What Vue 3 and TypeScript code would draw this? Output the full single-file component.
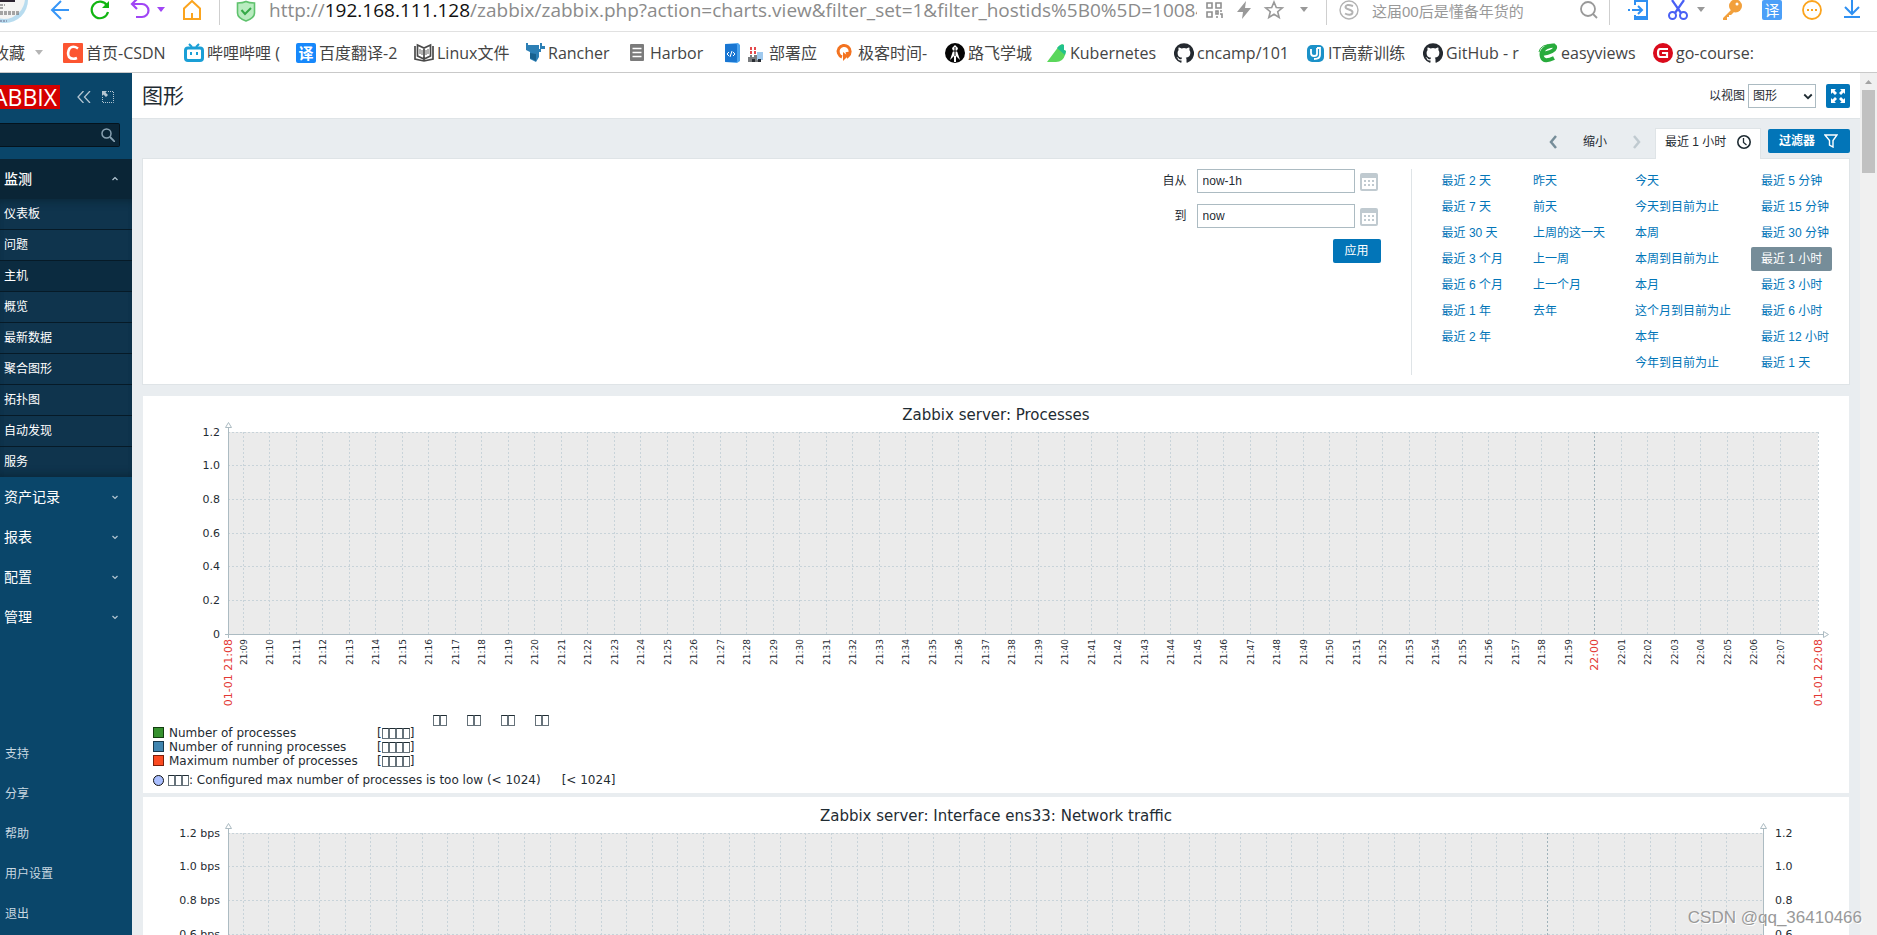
<script setup lang="ts">
import { computed, onBeforeUnmount, onMounted, ref } from 'vue'

interface Bookmark { icon: string; label: string }
interface GraphItem { name: string; tone: string }
interface Tick { x: number; label: string; major: boolean }
interface Graph {
  id: string
  title: string
  unit: string
  insetRight: number
  rightAxis: boolean
  timeLabels: boolean
  levelLabels: number
  items: GraphItem[]
}

const bookmarks: Bookmark[] = [
  { icon: 'csdn', label: '首页-CSDN' },
  { icon: 'bili', label: '哔哩哔哩 (' },
  { icon: 'fanyi', label: '百度翻译-2' },
  { icon: 'book', label: 'Linux文件' },
  { icon: 'rancher', label: 'Rancher' },
  { icon: 'doc', label: 'Harbor' },
  { icon: 'deploy', label: '部署应' },
  { icon: 'geek', label: '极客时间-' },
  { icon: 'luffy', label: '路飞学城' },
  { icon: 'bird', label: 'Kubernetes' },
  { icon: 'github', label: 'cncamp/101' },
  { icon: 'itpeixun', label: 'IT高薪训练' },
  { icon: 'github', label: 'GitHub - r' },
  { icon: 'easy', label: 'easyviews' },
  { icon: 'gocourse', label: 'go-course:' },
]

const monitoring = ['仪表板', '问题', '主机', '概览', '最新数据', '聚合图形', '拓扑图', '自动发现', '服务']
const sections = ['资产记录', '报表', '配置', '管理']
const support = ['支持', '分享', '帮助', '用户设置', '退出']

const ranges: string[][] = [
  ['最近 2 天', '最近 7 天', '最近 30 天', '最近 3 个月', '最近 6 个月', '最近 1 年', '最近 2 年'],
  ['昨天', '前天', '上周的这一天', '上一周', '上一个月', '去年'],
  ['今天', '今天到目前为止', '本周', '本周到目前为止', '本月', '这个月到目前为止', '本年', '今年到目前为止'],
  ['最近 5 分钟', '最近 15 分钟', '最近 30 分钟', '最近 1 小时', '最近 3 小时', '最近 6 小时', '最近 12 小时', '最近 1 天'],
]
const selectedRange = ref('最近 1 小时')
const from = ref('now-1h')
const to = ref('now')
const view = ref('图形')

const graphs: Graph[] = [
  {
    id: 'processes',
    title: 'Zabbix server: Processes',
    unit: '',
    insetRight: 31,
    rightAxis: false,
    timeLabels: true,
    levelLabels: 7,
    items: [
      { name: 'Number of processes', tone: 'green' },
      { name: 'Number of running processes', tone: 'blue' },
      { name: 'Maximum number of processes', tone: 'red' },
    ],
  },
  {
    id: 'traffic',
    title: 'Zabbix server: Interface ens33: Network traffic',
    unit: ' bps',
    insetRight: 86,
    rightAxis: true,
    timeLabels: false,
    levelLabels: 4,
    items: [],
  },
]

const LEFT = 85
const TOP = 36
const BOTTOM = 238
const levels = ['1.2', '1.0', '0.8', '0.6', '0.4', '0.2', '0']

const chartArea = ref<HTMLElement | null>(null)
const width = ref(1706)
let observer: ResizeObserver | undefined

onMounted(() => {
  if (!chartArea.value) return
  width.value = chartArea.value.clientWidth
  observer = new ResizeObserver(() => {
    if (chartArea.value) width.value = chartArea.value.clientWidth
  })
  observer.observe(chartArea.value)
})
onBeforeUnmount(() => observer?.disconnect())

const snap = (v: number) => Math.floor(v) + 0.5

const plots = computed(() =>
  graphs.map((g) => {
    const right = width.value - g.insetRight
    const step = (right - LEFT) / 60
    const ticks: Tick[] = []
    for (let i = 0; i < 59; i++) {
      const minute = 9 + i
      const hour = minute < 60 ? 21 : 22
      ticks.push({
        x: snap(LEFT + 15 + i * step),
        label: `${hour}:${String(minute % 60).padStart(2, '0')}`,
        major: minute % 60 === 0,
      })
    }
    const rows = levels.map((label, i) => ({
      y: snap(TOP + ((BOTTOM - TOP) * i) / 6),
      label: label === '0' ? '0' : label + g.unit,
      plain: label,
    }))
    return { ...g, right, ticks, rows, labelled: rows.slice(0, g.levelLabels) }
  }),
)
</script>

<template>
  <div class="window">
    <svg class="sprite" aria-hidden="true">
      <symbol id="csdn" viewBox="0 0 20 20"><rect width="20" height="20" rx="1" fill="#fc5531" /><path d="M15 5.500Q10 2 6.500 5.500Q4 10 6 14Q9 17 14 15" fill="none" stroke="#fff" stroke-width="2.600" /></symbol>
      <symbol id="bili" viewBox="0 0 20 20"><path d="M5 1l3 3M15 1l-3 3" stroke="#1a9fd6" stroke-width="2" /><rect x="1.500" y="5" width="17" height="12.500" rx="2.500" fill="#fff" stroke="#1a9fd6" stroke-width="3" /><path d="M7 9v3M13 9v3" stroke="#1a9fd6" stroke-width="2" /></symbol>
      <symbol id="fanyi" viewBox="0 0 20 20"><rect width="20" height="20" rx="2" fill="#1788fb" /><text x="10" y="15.500" text-anchor="middle" font-size="15" font-weight="700" fill="#fff">译</text></symbol>
      <symbol id="book" viewBox="0 0 20 20"><path d="M1 3v13l9 2 9-2V3M10 5v13M3.500 2L10 5l6.500-3v11L10 16l-6.500-3z" fill="none" stroke="#4a4a4a" stroke-width="1.700" /><path d="M6 6v5M8 7v5M12 7v5M14 6v5" stroke="#666" /></symbol>
      <symbol id="rancher" viewBox="0 0 20 20"><path d="M1 0h2v2h11v4h1V0h2v3h3v3h-4v3h-2v5l-3 5-6-3V9L1 7z" fill="#2c7fb5" /><path d="M5 10l6 1v7l-6-3z" fill="#18618f" /></symbol>
      <symbol id="doc" viewBox="0 0 20 20"><rect x="3" y="1" width="14" height="17" rx="1" fill="#7b7b7b" /><path d="M5.500 5.500h9M5.500 9.500h9M5.500 13.500h9" stroke="#fff" stroke-width="1.500" /></symbol>
      <symbol id="deploy" viewBox="0 0 44 20"><path d="M3 1l13-1 2 2v16l-3 2-12-1z" fill="#4aa3ee" /><rect x="3" y="1" width="12" height="18" rx="1" fill="#1976d2" /><path d="M7 9l-2 2 2 2M11 9l2 2-2 2M10 8l-2 6" fill="none" stroke="#fff" /><path d="M29 4v8M33 4v8" stroke="#e4494c" stroke-width="2" stroke-dasharray="3 1" /><path d="M26 19v-5h2v-2h2v2h2v-2h3v3h4v4z" fill="#7a7d80" /><rect x="35" y="9" width="6" height="8" fill="#9fc9ee" /><path d="M30 16h3v3h-3zM36 16h3v3h-3z" fill="#292d33" /></symbol>
      <symbol id="geek" viewBox="0 0 20 20"><path d="M7 14a6 6 0 1 1 6-1l-1-4" fill="none" stroke="#f37321" stroke-width="3" /><path d="M8 9v9l5-5z" fill="#f37321" /></symbol>
      <symbol id="luffy" viewBox="0 0 20 20"><circle cx="10" cy="10" r="10" fill="#050505" /><path d="M10 2l3 3-1 3 3 9-4-4v6H9v-6l-4 4 3-9-1-3z" fill="#fff" /><path d="M10 4v9M7 8h6" stroke="#050505" /></symbol>
      <symbol id="bird" viewBox="0 0 20 20"><path d="M0 19L12 3q3-3 5-1v5l2 1-1 4q-2 7-9 7z" fill="#5bd75b" /><path d="M10 5q4-5 7-3v5l2 1-1 4z" fill="#21c18c" /></symbol>
      <symbol id="github" viewBox="0 0 24 24"><path fill="#24292f" d="M12 .3a12 12 0 0 0-3.800 23.400c.6.1.8-.3.8-.6v-2.200c-3.300.7-4-1.400-4-1.400-.6-1.400-1.400-1.800-1.400-1.800-1-.7.1-.7.1-.7 1.200 0 1.900 1.200 1.900 1.200 1 1.800 2.800 1.300 3.500 1 0-.8.4-1.300.7-1.600-2.700-.3-5.500-1.300-5.500-6 0-1.200.5-2.300 1.300-3.100-.2-.4-.6-1.600 0-3.200 0 0 1-.3 3.400 1.200a11.500 11.500 0 0 1 6 0c2.300-1.500 3.300-1.200 3.300-1.200.6 1.600.2 2.800.1 3.200.8.800 1.200 1.900 1.200 3.200 0 4.600-2.800 5.600-5.500 5.900.5.4.9 1 .9 2.200v3.300c0 .3.1.7.800.6A12 12 0 0 0 12 .3" /></symbol>
      <symbol id="itpeixun" viewBox="0 0 20 20"><rect x="2" y="2" width="17" height="17" rx="5" fill="#1b91c8" /><path d="M6 6v4q0 3 3 3t3-2V5M12 5h3v7q0 4-6 4" fill="none" stroke="#fff" stroke-width="1.800" /></symbol>
      <symbol id="easy" viewBox="0 0 20 20"><path d="M4 11Q16 9 17 5T9 4Q2 8 4 14t12 1" fill="none" stroke="#28ab3c" stroke-width="4" /><path d="M1 9Q2 1 17 1" fill="none" stroke="#28ab3c" /></symbol>
      <symbol id="gocourse" viewBox="0 0 20 20"><circle cx="10" cy="10" r="10" fill="#da0b1c" /><path d="M15 6H7Q5 6 5 10t2 4h7v-4h-5" fill="none" stroke="#fff" stroke-width="2.200" /></symbol>
      <symbol id="caret" viewBox="0 0 10 10"><path d="M1 2h8L5 7z" fill="currentColor" /></symbol>
      <symbol id="chevron" viewBox="0 0 8 8"><path d="M1.500 3L4 5.500 6.500 3" fill="none" stroke="currentColor" stroke-width="1.200" /></symbol>
    </svg>

    <header class="toolbar">
      <svg class="avatar" viewBox="0 0 28 24"><circle cx="5" cy="0" r="23" fill="#b8dcef" /><circle cx="4" cy="-2" r="21" fill="#f5f5f3" /><path d="M0 0h15v2H0z" fill="#2c2430" /><path d="M0 5h5M0 8h4M0 12h20M0 14h19" stroke="#555" stroke-dasharray="3 1" /><path d="M0 21h7" stroke="#668" stroke-dasharray="2 1" /></svg>
      <button class="tool back" aria-label="后退"><svg viewBox="0 0 20 20"><path d="M19 10H3M11 1l-9 9 9 9" fill="none" stroke="#3796f7" stroke-width="2" /></svg></button>
      <button class="tool reload" aria-label="刷新"><svg viewBox="0 0 20 20"><path d="M17 5.500A8.300 8.300 0 1 0 18 12" fill="none" stroke="#12b512" stroke-width="2.200" /><path d="M19 1v7h-7z" fill="#12b512" /></svg></button>
      <button class="tool undo" aria-label="撤销"><svg viewBox="0 0 20 20"><path d="M2 4h10a6.500 6.500 0 0 1 0 13H6M7-1L2 4l5 5" fill="none" stroke="#a045f5" stroke-width="2.200" /></svg></button>
      <button class="mini violet" aria-label="更多撤销"><svg viewBox="0 0 10 10"><use href="#caret" /></svg></button>
      <button class="tool home" aria-label="主页"><svg viewBox="0 0 20 20"><path d="M2 8.500L10 1l8 7.500V19H2zM10 13v6" fill="none" stroke="#fba41e" stroke-width="2" /></svg></button>
      <i class="rule"></i>
      <svg class="shield" viewBox="0 0 20 22"><path d="M1.500 3Q7 3 10 1.500 13 3 18.500 3v10q0 5-8.500 8-8.500-3-8.500-8z" fill="#b9ecc0" stroke="#5fc26d" stroke-width="1.600" /><path d="M5.500 10l3.500 4 6-6" fill="none" stroke="#35a947" stroke-width="2" /></svg>
      <p class="url">http://<b>192.168.111.128</b>/zabbix/zabbix.php?action=charts.view&amp;filter_set=1&amp;filter_hostids%5B0%5D=10084</p>
      <button class="tool gray" aria-label="二维码"><svg viewBox="0 0 20 20"><path d="M3 3h5v5H3zM12 3h5v5h-5zM3 12h5v5H3zM12 11h2v3h-2zM16 14h2v4M12 17h2M16 11h2" fill="none" stroke="#8f8f8f" stroke-width="1.600" /></svg></button>
      <button class="tool gray" aria-label="加速"><svg viewBox="0 0 20 20"><path d="M12 1L3 12h6l-1 7 9-11h-6z" fill="#999" /></svg></button>
      <button class="tool gray" aria-label="收藏此页"><svg viewBox="0 0 20 20"><path d="M10 2l2.300 5.500 6 .4-4.600 3.800 1.500 5.800L10 14.300l-5.200 3.200 1.500-5.800L1.700 7.900l6-.4z" fill="none" stroke="#999" stroke-width="1.600" /></svg></button>
      <button class="mini gray-caret" aria-label="更多"><svg viewBox="0 0 10 10"><use href="#caret" /></svg></button>
      <i class="rule"></i>
      <form class="web-search" @submit.prevent>
        <svg viewBox="0 0 20 20"><circle cx="10" cy="10" r="9" fill="none" stroke="#b3b3b3" stroke-width="1.400" /><path d="M14 6Q7 3.500 6.500 7c0 3 7.500 2 7 5.500-.5 3-5 2.500-7.500 1" fill="none" stroke="#b3b3b3" stroke-width="2" /></svg>
        <input type="text" aria-label="网页搜索" placeholder="这届00后是懂备年货的" />
        <button aria-label="搜索"><svg viewBox="0 0 20 20"><circle cx="9" cy="9" r="7" fill="none" stroke="#999" stroke-width="1.800" /><path d="M14 14l4 4" stroke="#999" stroke-width="1.800" /></svg></button>
      </form>
      <i class="rule"></i>
      <div class="extras">
        <button class="tool" aria-label="手机"><svg viewBox="0 0 20 20"><path d="M7 5V1h12v18H7v-4" fill="none" stroke="#2f90f2" stroke-width="2" /><path d="M0 10h2M4 10h9M10 6l4 4-4 4M7 17h12" fill="none" stroke="#2f90f2" stroke-width="2" /></svg></button>
        <button class="tool" aria-label="截图"><svg viewBox="0 0 20 20"><path d="M4 0l9 13M16 0L7 13" stroke="#4960f5" stroke-width="2.200" /><circle cx="4.500" cy="15.500" r="3.500" fill="none" stroke="#4960f5" stroke-width="2" /><circle cx="15.500" cy="15.500" r="3.500" fill="none" stroke="#4960f5" stroke-width="2" /></svg></button>
        <button class="mini gray-caret" aria-label="截图选项"><svg viewBox="0 0 10 10"><use href="#caret" /></svg></button>
        <button class="tool" aria-label="密码"><svg viewBox="0 0 20 20"><circle cx="13.500" cy="6" r="6.500" fill="#f2a03c" /><circle cx="15" cy="4" r="1.500" fill="#fff" /><path d="M10 9l-9 9v2h4v-3h2v-2h2l3-3" fill="#f2a03c" /></svg></button>
        <button class="tool" aria-label="翻译"><svg viewBox="0 0 20 20"><rect width="20" height="20" rx="2" fill="#4c9ff8" /><text x="10" y="16" text-anchor="middle" font-size="15" fill="#fff">译</text></svg></button>
        <button class="tool" aria-label="扩展"><svg viewBox="0 0 20 20"><circle cx="10" cy="10" r="9" fill="none" stroke="#fba41e" stroke-width="1.800" /><path d="M5 9h2v2H5zM9 9h2v2H9zM13 9h2v2h-2z" fill="#fba41e" /></svg></button>
        <button class="tool" aria-label="下载"><svg viewBox="0 0 20 20"><path d="M10 0v14M3 7l7 7 7-7M2 17h16" fill="none" stroke="#2f90f2" stroke-width="2" /></svg></button>
      </div>
    </header>

    <nav class="bookmarks" aria-label="收藏夹">
      <button class="fav">收藏<svg viewBox="0 0 10 10"><use href="#caret" /></svg></button>
      <ul>
        <li v-for="b in bookmarks" :key="b.label">
          <a href="#"><svg :class="{ wide: b.icon === 'deploy' }"><use :href="'#' + b.icon" /></svg>{{ b.label }}</a>
        </li>
      </ul>
    </nav>

    <div class="page">
      <aside class="sidebar">
        <div class="brand">
          <a class="logo" href="#">ZABBIX</a>
          <button aria-label="收起侧栏"><svg class="collapse" viewBox="0 0 14 12"><path d="M6.500 0L1 6l5.500 6M13 0L7.500 6l5.500 6" fill="none" stroke="#b4c6d2" stroke-width="1.300" /></svg></button>
          <button aria-label="隐藏侧栏"><svg class="popout" viewBox="0 0 12 12"><path d="M.5 6v5.500h11V.5H6" fill="none" stroke="#b4c6d2" stroke-dasharray="1 1" /><path d="M0 0h5L3.500 1.500 6 4 4 6 1.500 3.500 0 5z" fill="#b4c6d2" /></svg></button>
        </div>
        <form class="side-search" @submit.prevent>
          <input type="text" aria-label="搜索主机" />
          <button aria-label="搜索"><svg viewBox="0 0 14 14"><circle cx="5.500" cy="5.500" r="4.500" fill="none" stroke="#89a2b2" stroke-width="1.500" /><path d="M9 9l5 5" stroke="#89a2b2" stroke-width="1.800" /></svg></button>
        </form>
        <nav class="menu" aria-label="主菜单">
          <button class="section open">监测<svg><use href="#chevron" /></svg></button>
          <ul>
            <li v-for="m in monitoring" :key="m"><a href="#" :class="{ current: m === '主机' }">{{ m }}</a></li>
          </ul>
          <button v-for="s in sections" :key="s" class="section">{{ s }}<svg><use href="#chevron" /></svg></button>
        </nav>
        <nav class="support" aria-label="支持菜单">
          <a v-for="s in support" :key="s" href="#">{{ s }}</a>
        </nav>
      </aside>

      <main>
        <div class="title-bar">
          <h1>图形</h1>
          <label for="view-as">以视图</label>
          <span class="select">
            <select id="view-as" v-model="view"><option>图形</option></select>
            <svg viewBox="0 0 8 8"><use href="#chevron" /></svg>
          </span>
          <button class="kiosk" aria-label="全屏"><svg viewBox="0 0 16 16"><path d="M1 1h5L4.500 2.500 7 5 5 7 2.500 4.500 1 6zM15 1v5l-1.500-1.500L11 7 9 5l2.500-2.500L10 1zM1 15v-5l1.500 1.500L5 9l2 2-2.500 2.500L6 15zM15 15h-5l1.500-1.500L9 11l2-2 2.500 2.500L15 10z" fill="#fff" /></svg></button>
        </div>

        <section class="filter">
          <div class="tabs">
            <button class="arrow" aria-label="上一时段"><svg viewBox="0 0 8 14"><path d="M7 1L2 7l5 6" fill="none" stroke="#768d99" stroke-width="2.500" /></svg></button>
            <button class="zoom-out">缩小</button>
            <button class="arrow" aria-label="下一时段" disabled><svg viewBox="0 0 8 14"><path d="M1 1l5 6-5 6" fill="none" stroke="#c0cad0" stroke-width="2.500" /></svg></button>
            <button class="tab">最近 1 小时<svg viewBox="0 0 14 14"><circle cx="7" cy="7" r="6.200" fill="none" stroke="#1f2c33" stroke-width="1.600" /><path d="M6.500 3v4.500l3 2.500" fill="none" stroke="#1f2c33" stroke-width="1.300" /></svg></button>
            <button class="filter-button">过滤器<svg viewBox="0 0 14 14"><path d="M1 1h12L9 6.500V13L5.500 11V6.500z" fill="none" stroke="#fff" stroke-width="1.400" /></svg></button>
          </div>
          <div class="panel">
            <form @submit.prevent>
              <div class="field">
                <label for="from">自从</label><input id="from" v-model="from" type="text" />
                <button class="cal" type="button" aria-label="选择开始时间"><svg viewBox="0 0 18 18"><rect x="1" y="1" width="16" height="16" rx="1" fill="none" stroke="#c0cad0" stroke-width="2" /><path d="M1 1h16v4H1z" fill="#c0cad0" /><path d="M4 8h10M4 12h10" stroke="#c0cad0" stroke-width="2" stroke-dasharray="2 2" /></svg></button>
              </div>
              <div class="field">
                <label for="to">到</label><input id="to" v-model="to" type="text" />
                <button class="cal" type="button" aria-label="选择结束时间"><svg viewBox="0 0 18 18"><rect x="1" y="1" width="16" height="16" rx="1" fill="none" stroke="#c0cad0" stroke-width="2" /><path d="M1 1h16v4H1z" fill="#c0cad0" /><path d="M4 8h10M4 12h10" stroke="#c0cad0" stroke-width="2" stroke-dasharray="2 2" /></svg></button>
              </div>
              <button class="apply">应用</button>
            </form>
            <div class="ranges">
              <ul v-for="(col, i) in ranges" :key="i">
                <li v-for="r in col" :key="r"><a href="#" :class="{ selected: r === selectedRange }" @click.prevent="selectedRange = r">{{ r }}</a></li>
              </ul>
            </div>
          </div>
        </section>

        <div ref="chartArea" class="charts">
          <section v-for="p in plots" :key="p.id" class="card">
            <svg class="plot" role="img" :aria-label="p.title">
              <text class="chart-title" :x="width / 2" y="24" text-anchor="middle">{{ p.title }}</text>
              <rect :x="LEFT" :y="TOP" :width="p.right - LEFT" :height="BOTTOM - TOP" fill="#ebebeb" />
              <line v-for="r in p.rows.slice(0, 6)" :key="'h' + r.plain" class="grid" :x1="LEFT" :x2="p.right" :y1="r.y" :y2="r.y" />
              <line v-for="t in p.ticks" :key="'v' + t.label" class="grid" :class="{ major: t.major }" :x1="t.x" :x2="t.x" :y1="TOP" :y2="BOTTOM" />
              <line class="grid" :x1="p.right + 0.5" :x2="p.right + 0.5" :y1="TOP" :y2="BOTTOM" />
              <path class="axis" :d="`M${LEFT + 0.5} 31V${BOTTOM + 4}M${LEFT - 3} ${BOTTOM + 0.5}H${p.right + 5}`" />
              <path class="tip" :d="`M${LEFT - 2.5} 31.500h6l-3-5z`" />
              <path v-if="!p.rightAxis" class="tip" :d="`M${p.right + 5.5} ${BOTTOM - 2.5}v6l5-3z`" />
              <template v-else>
                <path class="axis" :d="`M${p.right + 0.5} 31V${BOTTOM + 4}`" />
                <path class="tip" :d="`M${p.right - 2.5} 31.500h6l-3-5z`" />
                <text v-for="r in p.labelled" :key="'r' + r.plain" class="level" :x="p.right + 12" :y="r.y + 3.5">{{ r.plain }}</text>
              </template>
              <text v-for="r in p.labelled" :key="'l' + r.plain" class="level" :x="LEFT - 8" :y="r.y + 3.5" text-anchor="end">{{ r.label }}</text>
              <template v-if="p.timeLabels">
                <text v-for="t in p.ticks" :key="'t' + t.label" class="minute" :class="{ major: t.major }" :transform="`translate(${t.x + 3.5} ${BOTTOM + 5}) rotate(-90)`" text-anchor="end">{{ t.label }}</text>
                <text class="minute major" :transform="`translate(${LEFT + 4} ${BOTTOM + 5}) rotate(-90)`" text-anchor="end">01-01 21:08</text>
                <text class="minute major" :transform="`translate(${p.right + 4} ${BOTTOM + 5}) rotate(-90)`" text-anchor="end">01-01 22:08</text>
              </template>
            </svg>
            <template v-if="p.items.length">
              <table class="legend">
                <thead>
                  <tr><th class="name"></th><th class="kind"></th><th v-for="n in 4" :key="n" class="stat"><i v-for="k in 2" :key="k" class="box"></i></th></tr>
                </thead>
                <tbody>
                  <tr v-for="item in p.items" :key="item.name">
                    <td><span class="swatch" :class="item.tone"></span>{{ item.name }}</td>
                    <td>[<i v-for="k in 4" :key="k" class="box"></i>]</td>
                  </tr>
                </tbody>
              </table>
              <p class="trigger"><span class="dot"></span><i v-for="k in 3" :key="k" class="box"></i><span class="cond">: Configured max number of processes is too low (&lt; 1024)</span><span>[&lt; 1024]</span></p>
            </template>
          </section>
        </div>
      </main>

      <div class="scrollbar" aria-hidden="true"><svg viewBox="0 0 17 17"><path d="M5 11h7L8.500 7z" fill="#a3a3a3" /></svg><span></span></div>
    </div>
    <div class="watermark">CSDN @qq_36410466</div>
  </div>
</template>

<style>
body { margin: 0; }
</style>

<style scoped>
.window { height: 100vh; display: flex; flex-direction: column; overflow: hidden; position: relative; background: #fff; color: #1f2c33; font: 12px/16px "Liberation Sans", "Noto Sans CJK SC", sans-serif; }
.sprite { position: absolute; width: 0; height: 0; }
.sprite text, .toolbar text { font-family: "Noto Sans CJK SC", sans-serif; }
button { padding: 0; border: 0; background: none; color: inherit; font: inherit; cursor: pointer; }
svg { display: block; flex: none; }
a { color: inherit; text-decoration: none; }
ul { list-style: none; margin: 0; padding: 0; }
input, select { box-sizing: border-box; font: inherit; color: inherit; border-radius: 0; outline: 0; }

.toolbar { flex: none; display: flex; align-items: flex-start; height: 31px; border-bottom: 1px solid #e1e1e1; overflow: hidden; }
.avatar { width: 28px; height: 24px; }
.tool { flex: none; width: 20px; height: 20px; }
.tool svg { width: 20px; height: 20px; overflow: visible; }
.back { margin-left: 22px; }
.reload, .undo { margin-left: 20px; }
.mini { flex: none; width: 10px; height: 20px; display: flex; align-items: center; }
.mini svg { width: 10px; height: 10px; }
.violet { margin-left: 6px; color: #a045f5; }
.gray-caret { color: #999; }
.home { margin-left: 16px; }
.rule { flex: none; width: 1px; height: 25px; background: #cfcfcf; margin: 0 17px; }
.shield { width: 20px; height: 22px; margin: 0 13px 0 -1px; }
.url { flex: 1 1 0; min-width: 0; height: 24px; margin: 0 7px 0 0; overflow: hidden; white-space: nowrap; color: #8b8b8b; font: 19px/20px "Open Sans", sans-serif; }
.url b { color: #111; font-weight: 400; }
.gray { margin-right: 10px; }
.gray + .gray-caret { margin-left: 5px; }
.web-search { display: flex; align-items: flex-start; width: 260px; margin: 0 -7px 0 -5px; }
.web-search > svg, .web-search button svg { width: 20px; height: 20px; }
.web-search input { flex: 1; min-width: 0; height: 24px; margin-left: 13px; padding: 0; border: 0; font: 15px/24px "Liberation Sans", "Noto Sans CJK SC", sans-serif; }
.web-search input::placeholder { color: #999; opacity: 1; }
.extras { display: flex; gap: 20px; margin: 0 15px 0 1px; }
.extras .mini { margin: 0 -10px 0 -12px; }
.extras .mini + .tool { margin-left: 6px; }

.bookmarks { flex: none; display: flex; align-items: center; box-sizing: border-box; height: 41px; padding-top: 2px; border-bottom: 1px solid #c9c9c9; color: #444; font: 16px/24px "Open Sans", "Noto Sans CJK SC", sans-serif; white-space: nowrap; overflow: hidden; }
.fav { display: flex; align-items: center; justify-content: flex-end; gap: 9px; width: 44px; margin-right: 19px; overflow: hidden; }
.fav svg { width: 10px; height: 10px; color: #b5b5b5; }
.bookmarks ul { display: grid; grid-template-columns: 121px 112px 118px 111px 102px 95px 113px 110px 102px 127px 131px 118px 115px 115px auto; }
.bookmarks a { display: flex; align-items: center; gap: 3px; }
.bookmarks a svg { width: 20px; height: 20px; }
.bookmarks a svg.wide { width: 44px; }

.page { flex: 1; min-height: 0; display: flex; }
.sidebar { flex: none; width: 132px; display: flex; flex-direction: column; background: #0a466a; color: #fff; }
.brand { display: flex; align-items: center; height: 24px; margin-top: 12px; }
.logo { display: flex; justify-content: flex-end; width: 57px; height: 24px; padding-right: 3px; margin-right: 17px; overflow: hidden; background: #d40000; font: 23px/24px "Open Sans", sans-serif; }
.collapse { width: 14px; height: 12px; margin-right: 11px; }
.popout { width: 12px; height: 12px; }
.side-search { display: flex; align-items: center; box-sizing: border-box; width: 120px; height: 24px; margin: 14px 0 12px; padding-right: 4px; border: 1px solid #04131d; border-left: 0; border-radius: 0 2px 2px 0; background: #0a2536; }
.side-search input { flex: 1; min-width: 0; height: 20px; border: 0; background: none; }
.side-search svg { width: 14px; height: 14px; }
.section { display: flex; align-items: center; justify-content: space-between; width: 100%; height: 40px; padding: 0 13px 0 4px; font-size: 14px; }
.section svg { width: 8px; height: 8px; color: #b4c6d2; }
.section.open { background: #0a2536; font-weight: 500; }
.section.open svg { transform: scaleY(-1); }
.menu ul { background: #0f344d; box-shadow: inset 0 8px 8px -6px #0a2738, inset 0 -8px 8px -6px #0a2738; }
.menu li a { display: block; height: 30px; padding-left: 4px; line-height: 30px; }
.menu li + li { border-top: 1px solid #061a27; }
.menu .current { background: #0b2b40; }
.support { margin-top: auto; margin-bottom: 1px; }
.support a { display: block; height: 40px; padding-left: 5px; line-height: 40px; color: #c9d8e1; }

main { flex: 1; min-width: 0; overflow: hidden; background: #e9edf0; }
.title-bar { display: flex; align-items: center; height: 45px; padding: 0 10px; border-bottom: 1px solid #dfe4e7; background: #fff; }
h1 { margin: 0 auto 0 0; font-size: 21px; line-height: 24px; font-weight: 400; }
.select { position: relative; margin: 0 10px 0 3px; }
.select select { display: block; width: 68px; height: 24px; padding: 0 4px; border: 1px solid #acbbc2; background: #fff; appearance: none; }
.select svg { position: absolute; right: 2px; top: 6px; width: 12px; height: 12px; pointer-events: none; }
.kiosk { display: grid; place-items: center; width: 24px; height: 24px; border-radius: 2px; background: #0275b8; }
.kiosk svg { width: 16px; height: 16px; }

.filter { margin: 9px 10px 11px; }
.tabs { display: flex; align-items: center; justify-content: flex-end; height: 30px; }
.arrow { width: 8px; height: 14px; margin-bottom: 3px; }
.arrow svg { width: 8px; height: 14px; }
.zoom-out { margin: 0 26px 3px; }
.tab { position: relative; z-index: 1; display: flex; align-items: center; box-sizing: border-box; width: 106px; height: 31px; margin: 0 7px -1px 14px; padding: 0 9px 4px; border: 1px solid #dfe4e7; border-bottom: 0; background: #fff; white-space: nowrap; justify-content: space-between; }
.tab svg, .filter-button svg { width: 14px; height: 14px; }
.filter-button { display: flex; align-items: center; gap: 9px; width: 82px; height: 24px; padding: 0 11px; margin-bottom: 4px; border-radius: 2px; background: #0275b8; color: #fff; font-weight: 700; white-space: nowrap; }
.panel { display: flex; justify-content: flex-end; padding: 10px 10px 9px; border: 1px solid #dfe4e7; background: #fff; }
.panel form { display: flex; flex-direction: column; align-items: flex-end; gap: 11px; padding-right: 30px; }
.field { display: flex; align-items: center; padding-right: 3px; }
.field input { width: 158px; height: 24px; margin: 0 5px 0 10px; padding: 0 5px; border: 1px solid #acbbc2; background: #fff; }
.cal { padding-top: 2px; }
.cal svg { width: 18px; height: 18px; }
.apply { width: 48px; height: 24px; border-radius: 2px; background: #0275b8; color: #fff; }
.ranges { display: flex; gap: 10px; padding-left: 20px; border-left: 1px solid #dfe4e7; }
.ranges li { height: 26px; }
.ranges li:last-child { height: 24px; }
.ranges a { display: inline-block; padding: 4px 10px; border-radius: 2px; color: #0275b8; white-space: nowrap; }
.ranges a.selected { background: #768d99; color: #fff; }

.charts { display: grid; gap: 4px; margin: 0 11px; font-family: "DejaVu Sans", sans-serif; }
.card { background: #fff; height: 397px; }
.plot { width: 100%; height: 318px; shape-rendering: crispEdges; }
.plot text { fill: #1f2c33; }
.chart-title { font-size: 15px; }
.level { font-size: 11px; }
.minute { font-size: 9px; }
.plot .minute.major { font-size: 11px; fill: #e33734; }
.grid { stroke: #c8d3d9; stroke-dasharray: 2 2; }
.grid.major { stroke: #9fb2ba; }
.axis { fill: none; stroke: #acbbc2; }
.tip { fill: #fff; stroke: #acbbc2; shape-rendering: auto; }
.legend { margin-left: 10px; border-collapse: collapse; table-layout: fixed; font-size: 12px; line-height: 14px; white-space: nowrap; }
.legend th, .legend td { padding: 0; font-weight: 400; text-align: left; }
.legend tr { height: 14px; }
.legend thead tr { height: 12px; line-height: 12px; }
.legend .name { width: 224px; }
.legend .kind { width: 56px; }
.legend .stat { width: 34px; }
.box { display: inline-block; box-sizing: border-box; width: 7px; height: 11px; border: 1px solid #66727a; border-top-color: #1f2c33; vertical-align: -2px; }
.legend th .box { vertical-align: middle; }
.swatch { display: inline-block; box-sizing: border-box; width: 11px; height: 11px; margin-right: 5px; border: 1px solid #222; vertical-align: -1px; }
.green { background: #36912e; border-color: #123d10; }
.blue { background: #4085b0; border-color: #17384d; }
.red { background: #fb4a20; border-color: #7b1f0a; }
.trigger { display: flex; align-items: center; margin: 5px 0 0 10px; font-size: 12px; line-height: 14px; white-space: nowrap; }
.dot { box-sizing: border-box; width: 11px; height: 11px; margin-right: 4px; border: 1px solid #111; border-radius: 50%; background: #aabfff; }
.cond { margin-right: 21px; }

.scrollbar { flex: none; width: 17px; background: #f0f0f0; }
.scrollbar svg { width: 17px; height: 17px; }
.scrollbar span { display: block; height: 83px; margin: 0 2px; background: #c1c1c1; }
.watermark { position: absolute; right: 15px; bottom: 5px; color: #999; font-size: 17px; line-height: 24px; text-shadow: 1px 1px 0 #fff; }
</style>
